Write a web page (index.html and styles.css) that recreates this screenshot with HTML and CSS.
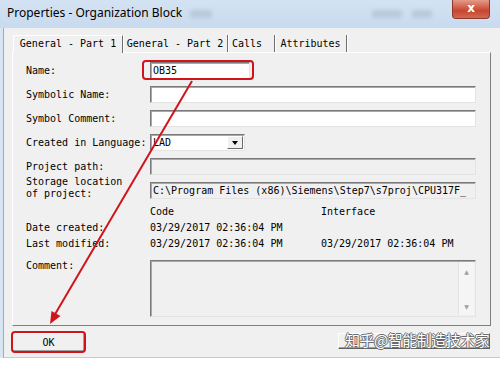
FILE: index.html
```html
<!DOCTYPE html>
<html lang="en">
<head>
	<meta charset="UTF-8">
	<title>Properties - Organization Block</title>
	<link rel="stylesheet" href="styles.css">
</head>
<body>
	<div class="window">
		<div class="titlebar">
			<span class="title">Properties - Organization Block</span>
			<span class="smudge s1"></span>
			<span class="smudge s2"></span>
			<span class="smudge s3"></span>
			<span class="close">x</span>
		</div>
		<div class="frame">
			<div class="client">
				<div class="tabs">
					<div class="tab active">General - Part 1</div>
					<div class="tab t2">General - Part 2</div>
					<div class="tab t3">Calls</div>
					<div class="tab t4">Attributes</div>
				</div>
				<div class="panel">
					<div class="row">
						<span class="label">Name:</span>
						<div class="field short">OB35</div>
					</div>
					<div class="row">
						<span class="label">Symbolic Name:</span>
						<div class="field"></div>
					</div>
					<div class="row">
						<span class="label">Symbol Comment:</span>
						<div class="field"></div>
					</div>
					<div class="row">
						<span class="label">Created in Language:</span>
						<div class="field combo">LAD<span class="drop"></span></div>
					</div>
					<div class="row">
						<span class="label">Project path:</span>
						<div class="field off"></div>
					</div>
					<div class="row">
						<span class="label two">Storage location<br>of project:</span>
						<div class="field off">C:\Program Files (x86)\Siemens\Step7\s7proj\CPU317F_</div>
					</div>
					<div class="info head">
						<span></span><span>Code</span><span>Interface</span>
					</div>
					<div class="info">
						<span>Date created:</span><span>03/29/2017 02:36:04 PM</span><span></span>
					</div>
					<div class="info">
						<span>Last modified:</span><span>03/29/2017 02:36:04 PM</span><span>03/29/2017 02:36:04 PM</span>
					</div>
					<div class="comment">
						<span class="label">Comment:</span>
						<div class="memo">
							<div class="scroll"><span>&#9650;</span><span>&#9660;</span></div>
						</div>
					</div>
				</div>
				<div class="buttons">
					<div class="btn ok">OK</div>
					<div class="pair">
						<div class="btn"></div>
						<div class="btn"></div>
						<span class="watermark">知乎@智能制造技术家</span>
					</div>
				</div>
			</div>
		</div>
	</div>

	<svg class="marks" width="500" height="365" viewBox="0 0 500 365">
		<rect x="143" y="61" width="110" height="18" rx="3" fill="none" stroke="#d1141b" stroke-width="2"/>
		<line x1="192" y1="81" x2="54" y2="316" stroke="#d1141b" stroke-width="2"/>
		<polygon points="50,324 60.5,316 51.5,311" fill="#d1141b"/>
		<rect x="12" y="332" width="73" height="20" rx="3" fill="none" stroke="#d1141b" stroke-width="2"/>
	</svg>
</body>
</html>
```

FILE: styles.css
```css
*{
	box-sizing: border-box;
}
body{
	margin:0;
	background:#fff;
	overflow:hidden;
	font-family:"DejaVu Sans Mono","Liberation Mono",monospace;
	font-size:10px;
	color:#000;
}
.window{
	width:500px;
	height:358px;
	display:flex;
	flex-direction:column;
	background:#d8e5f2;
}
.titlebar{
	height:28px;
	display:flex;
	align-items:flex-start;
	background:linear-gradient(#d4e3f3,#c8daee);
}
.title{
	flex:none;
	white-space:nowrap;
	font-family:"Noto Sans","Open Sans",sans-serif;
	font-size:12px;
	line-height:18px;
	padding:4px 0 0 7px;
	color:#000;
}
.smudge{
	flex:none;
	height:8px;
	margin-top:10px;
	background:#9fb0c4;
	opacity:.45;
	filter:blur(2px);
}
.s1{width:22px;margin-left:8px;}
.s2{width:30px;margin-left:160px;}
.s3{width:20px;margin-left:10px;}
.close{
	flex:none;
	margin-left:auto;
	margin-right:10px;
	width:38px;
	height:19px;
	border:1px solid #8c3a2c;
	border-top:none;
	border-radius:0 0 4px 4px;
	background:linear-gradient(#e59a88,#c7452f 60%,#d06a52);
	color:#fff;
	font-family:"DejaVu Sans",sans-serif;
	font-weight:bold;
	font-size:12px;
	line-height:16px;
	text-align:center;
}
.frame{
	flex:1;
	padding-left:3px;
	display:flex;
}
.client{
	flex:1;
	background:#f0f0f0;
	border-left:1px solid #9aabbe;
	border-bottom:1px solid #c9c9c9;
}
.tabs{
	display:flex;
	margin:7px 0 0 9px;
	height:17px;
	position:relative;
	z-index:1;
}
.tab{
	height:17px;
	line-height:17px;
	text-align:center;
	border-right:1px solid #6e6e6e;
	box-shadow:1px 0 0 #fff;
	flex:none;
}
.tab.active{
	width:110px;
	height:18px;
	background:#f0f0f0;
	border-top:1px solid #fff;
	border-left:1px solid #fff;
	line-height:16px;
}
.t2{width:105px;}
.t3{width:47px;padding-right:8px;}
.t4{width:72px;}
.panel{
	margin:0 9px 0 8px;
	border:1px solid;
	border-color:#fff #7f7f7f #7f7f7f #fff;
	padding:5px 14px 8px 13px;
}
.row{
	display:flex;
	align-items:center;
	height:24px;
}
.label{
	width:124px;
	flex:none;
	white-space:nowrap;
}
.label.two{
	line-height:12px;
	align-self:flex-start;
	margin-top:-2px;
}
.field{
	flex:1;
	height:17px;
	border:1px solid;
	border-color:#7a7a7a #e4e4e4 #e4e4e4 #7a7a7a;
	box-shadow:inset 1px 1px 0 #a8a8a8;
	background:#fff;
	padding-left:2px;
	line-height:15px;
	white-space:nowrap;
	overflow:hidden;
}
.field.short{
	flex:none;
	width:100px;
}
.field.off{
	background:#f0f0f0;
}
.combo{
	flex:none;
	width:95px;
	display:flex;
	justify-content:space-between;
	padding-right:1px;
}
.drop{
	width:16px;
	height:13px;
	margin-top:1px;
	background:#f0f0f0;
	border:1px solid;
	border-color:#fff #6a6a6a #6a6a6a #fff;
	position:relative;
}
.drop::after{
	content:"";
	position:absolute;
	left:4px;
	top:4px;
	border-left:3px solid transparent;
	border-right:3px solid transparent;
	border-top:4px solid #000;
}
.info{
	display:grid;
	grid-template-columns:124px 171px 1fr;
	align-items:center;
	height:16px;
	white-space:nowrap;
}
.info.head{
	margin-top:1px;
}
.comment{
	display:flex;
	align-items:flex-start;
	margin-top:9px;
}
.comment .label{
	line-height:12px;
}
.memo{
	flex:1;
	height:57px;
	border:1px solid;
	border-color:#7a7a7a #e4e4e4 #e4e4e4 #7a7a7a;
	box-shadow:inset 1px 1px 0 #a8a8a8;
	background:#f0f0f0;
	display:flex;
	justify-content:flex-end;
	padding:1px 1px 1px 0;
}
.scroll{
	width:16px;
	background:#f5f5f5;
	border-left:1px solid #e2e2e2;
	display:flex;
	flex-direction:column;
	justify-content:space-between;
	align-items:center;
	padding:6px 0 5px;
	color:#a0a0a0;
	font-family:"DejaVu Sans",sans-serif;
	font-size:6px;
	line-height:7px;
}
.buttons{
	display:flex;
	justify-content:space-between;
	margin:7px 10px 0 8px;
}
.btn{
	height:19px;
	width:73px;
	background:#f0f0f0;
	border:1px solid;
	border-color:#fff #5f5f5f #5f5f5f #fff;
	box-shadow:inset -1px -1px 0 #a0a0a0;
	text-align:center;
	line-height:17px;
}
.pair{
	display:flex;
	position:relative;
}
.pair .btn{
	width:72px;
	height:16px;
}
.pair .btn + .btn{
	width:80px;
}
.watermark{
	position:absolute;
	left:7px;
	top:-3px;
	font-family:"Noto Sans CJK SC",sans-serif;
	font-size:15px;
	line-height:20px;
	color:#fff;
	white-space:nowrap;
	letter-spacing:-0.5px;
	text-shadow:1px 0 0 #6a6a6a,-1px 0 0 #6a6a6a,0 1px 0 #6a6a6a,0 -1px 0 #6a6a6a;
}
.marks{
	position:absolute;
	left:0;
	top:0;
	pointer-events:none;
}
```
